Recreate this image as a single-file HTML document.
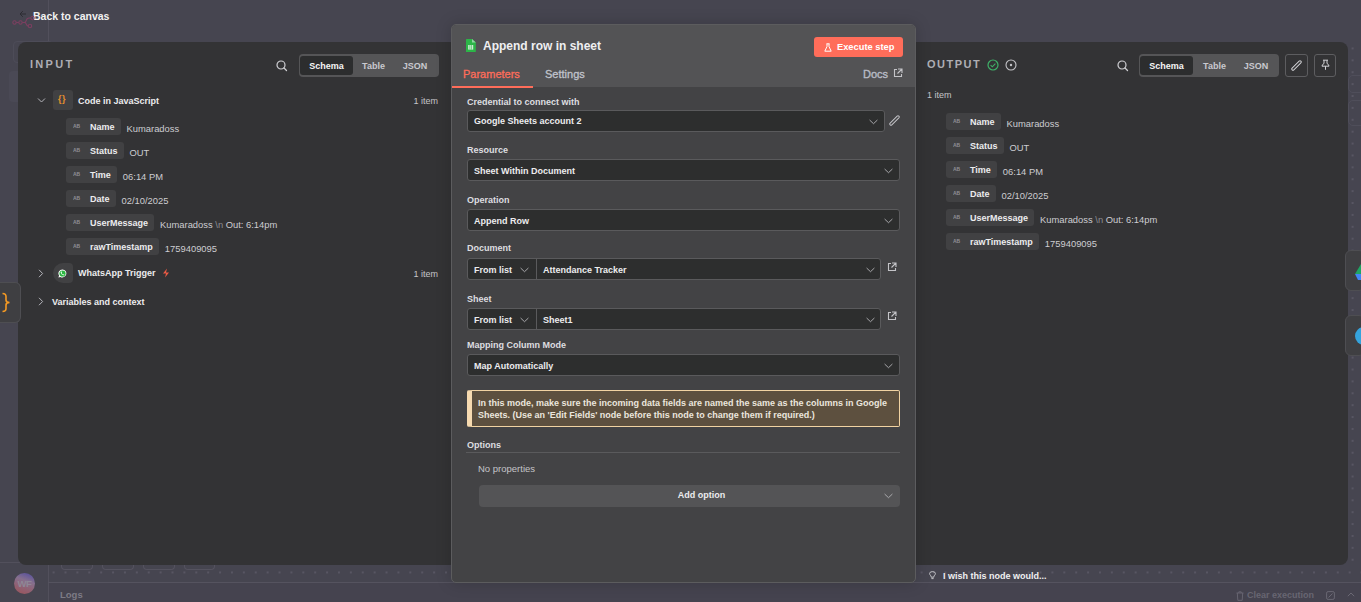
<!DOCTYPE html>
<html><head><meta charset="utf-8">
<style>
*{box-sizing:border-box;margin:0;padding:0}
html,body{width:1361px;height:602px;overflow:hidden}
body{background:#464550;font-family:"Liberation Sans",sans-serif;position:relative;color:#e6e6e8}
.abs{position:absolute}
.sidebar-line{left:48px;top:0;width:1px;height:602px;background:#52505c}
.side-hline{left:0;top:562px;width:48px;height:1px;background:#52505c}
.logs-line{left:48px;top:582px;width:1313px;height:1px;background:#55535f}
.logs{left:49px;top:583px;width:1312px;height:19px;background:#45434f}
.logs-txt{left:60px;top:589px;font-size:9.5px;font-weight:bold;color:#7d7b86}
.avatar{left:14px;top:573px;width:21px;height:21px;border-radius:50%;background:linear-gradient(200deg,#4e4aa0 0%,#86708e 38%,#8e6478 60%,#9c5258 100%);color:#8e8796;font-size:9.5px;font-weight:bold;text-align:center;line-height:21px;letter-spacing:-0.3px}
.back{left:33px;top:10px;font-size:10.5px;font-weight:bold;color:#f2f2f2}
.panel{background:#333335;border-radius:8px}
.inp{left:18px;top:42px;width:440px;height:523px}
.outp{left:908px;top:42px;width:440px;height:523px}
.lbl-big{font-size:11px;letter-spacing:2.3px;color:#aeaeb4;font-weight:bold}
.seg{height:23px;background:#555557;border-radius:4px}
.seg span{position:absolute;top:2px;height:19px;line-height:20px;font-size:9px;font-weight:bold;color:#c9c9cf;text-align:center}
.seg .on{background:#2c2d2e;border-radius:3px;color:#f5f5f5}
.pill{height:17px;background:#414143;border-radius:3px;font-size:10px;font-weight:bold;color:#ececec;line-height:17px}
.pill i{position:absolute;left:7px;top:0;font-style:normal;font-size:5px;color:#9a9aa0;letter-spacing:0.2px}
.pill b{position:absolute;left:24px;top:-1px;font-weight:bold}
.val{font-size:10px;color:#cfcfd3}
.modal{left:451px;top:24px;width:465px;height:559px;background:#434345;border:1px solid #5c5c5e;border-radius:5px;overflow:hidden;box-shadow:0 0 16px rgba(0,0,0,.18)}
.mhead{left:0;top:0;width:463px;height:62px;background:#535355}
.flabel{font-size:10px;font-weight:bold;color:#e2e2e4}
.field{background:#2d2e2e;border:1px solid #58585a;border-radius:4px;height:22px}
.field span{position:absolute;left:6px;top:0;line-height:20px;font-size:10px;font-weight:bold;color:#eeeeee}
.chev{position:absolute;width:9px;height:6px}

.ttl{font-size:9px;font-weight:bold;color:#ececee;line-height:11px}
.cnt{font-size:9px;color:#c4c4c8;text-align:right;line-height:11px}
.row{position:absolute;height:17px;display:flex;align-items:flex-start}
.pl{position:relative;height:17px;background:#414143;border-radius:3px;padding:0 6px 0 24px;font-size:9px;font-weight:bold;color:#ececee;line-height:18px;white-space:nowrap}
.pl:before{content:"";position:absolute;left:7px;top:7px;width:8px;height:3px;background:none}
.ab{position:absolute;left:7px;top:6px;width:8px;height:4px}
.vl{margin-left:6px;margin-top:5px;font-size:9.4px;color:#cdcdd1;line-height:12px;white-space:nowrap}

.fl{position:absolute;left:15px;margin-top:1px;font-size:9px;font-weight:bold;color:#dedee0;line-height:11px}
.fd{position:absolute;left:16px;height:22px;background:#2d2e2e;border:1px solid #5a5a5c;border-radius:3px}
.fd .t{position:absolute;left:6px;top:5px;font-size:9px;font-weight:bold;color:#ececee;line-height:12px;white-space:nowrap}
.cv{position:absolute;top:8px;width:9px;height:6px}
.ext{position:absolute;width:10px;height:10px}
.dots{background-image:radial-gradient(circle,#585663 0.7px,transparent 0.9px);background-size:11.9px 11.9px;background-position:10.55px 0.5px}
</style></head><body>
<div class="abs sidebar-line"></div>
<div class="abs side-hline"></div>
<div class="abs logs-line"></div>
<div class="abs logs"></div>
<div class="abs logs-txt">Logs</div>
<div class="abs avatar">WF</div>
<div class="abs back">Back to canvas</div>


<!-- canvas background details -->
<div class="abs dots" style="left:49px;top:566px;width:1312px;height:16px"></div>
<div class="abs dots" style="left:1348px;top:42px;width:13px;height:524px"></div>

<div class="abs" style="left:13px;top:41px;width:40px;height:22px;border:1px solid #4d4c58;border-radius:4px"></div>
<div class="abs" style="left:9px;top:71px;width:30px;height:31px;background:#4a4955;border-radius:4px"></div>
<svg class="abs" style="left:11px;top:15px" width="26" height="14" viewBox="0 0 26 14"><g fill="none" stroke="#7b3f60" stroke-width="1.1"><circle cx="3.5" cy="7.5" r="1.7"/><circle cx="9.5" cy="7.5" r="1.7"/><circle cx="19" cy="11" r="1.7"/><circle cx="21.5" cy="3" r="1.7"/><path d="M5.2 7.5 H7.8 M11.2 7.5 H13.5 Q14.5 7.5 15 6 Q15.8 3 18 3 H19.8 M13.5 7.5 Q14.8 7.5 15.5 9.5 Q16 11 17.3 11"/></g></svg>
<svg class="abs" style="left:19px;top:10px" width="8" height="8" viewBox="0 0 8 8"><path d="M7 4 H1.2 M3.8 1.2 L1 4 L3.8 6.8" fill="none" stroke="#2c2c33" stroke-width="1"/></svg>
<div class="abs" style="left:1348px;top:75px;width:20px;height:18px;border:1px solid #4f4e5a;border-radius:5px"></div>
<div class="abs" style="left:1348px;top:100px;width:20px;height:26px;border:1px solid #4f4e5a;border-radius:5px"></div>
<div class="abs" style="left:61px;top:550px;width:32px;height:20px;border:1px solid #55535f;border-radius:0 0 4px 4px;border-top:none"></div>
<div class="abs" style="left:102px;top:550px;width:32px;height:20px;border:1px solid #55535f;border-radius:0 0 4px 4px;border-top:none"></div>
<div class="abs" style="left:143px;top:550px;width:32px;height:20px;border:1px solid #55535f;border-radius:0 0 4px 4px;border-top:none"></div>
<div class="abs" style="left:184px;top:550px;width:31px;height:20px;border:1px solid #55535f;border-radius:0 0 4px 4px;border-top:none"></div>
<svg class="abs" style="left:929px;top:571px" width="7" height="9" viewBox="0 0 7 9"><path d="M2.2 6.2 Q2.2 5 1.4 4.2 Q0.6 3.4 0.6 2.6 Q0.6 0.6 3.5 0.6 Q6.4 0.6 6.4 2.6 Q6.4 3.4 5.6 4.2 Q4.8 5 4.8 6.2 Z M2.4 7.6 H4.6" fill="none" stroke="#d0d0d4" stroke-width="0.9"/></svg>
<div class="abs" style="left:943px;top:571px;font-size:9px;font-weight:bold;color:#efeff1;line-height:11px">I wish this node would...</div>
<svg class="abs" style="left:1236px;top:591px" width="8" height="10" viewBox="0 0 8 10"><path d="M0.5 2 H7.5 M2.8 2 V0.8 H5.2 V2 M1.3 2 L1.8 9.3 H6.2 L6.7 2" fill="none" stroke="#6a6874" stroke-width="0.9"/></svg>
<div class="abs" style="left:1247px;top:590px;font-size:9px;font-weight:bold;color:#686672;line-height:11px">Clear execution</div>
<svg class="abs" style="left:1326px;top:591px" width="9" height="9" viewBox="0 0 9 9"><rect x="0.6" y="0.6" width="7.8" height="7.8" rx="1.5" fill="none" stroke="#6a6874" stroke-width="1"/><path d="M2.5 6.5 L6.5 2.5" stroke="#6a6874"/></svg>
<svg class="abs" style="left:1347px;top:592px" width="8" height="5" viewBox="0 0 8 5"><path d="M0.8 4.2 L4 1 L7.2 4.2" fill="none" stroke="#6a6874" stroke-width="1"/></svg>

<!-- INPUT panel -->
<div class="abs panel inp"></div>
<div class="abs lbl-big" style="left:30px;top:58px">INPUT</div>
<svg class="abs" style="left:276px;top:60px" width="12" height="12" viewBox="0 0 12 12"><circle cx="5" cy="5" r="4" fill="none" stroke="#cfcfd3" stroke-width="1.2"/><path d="M8 8 L10.5 10.5" stroke="#cfcfd3" stroke-width="1.3" stroke-linecap="round"/></svg>
<div class="abs seg" style="left:299px;top:54px;width:140px">
  <span class="on" style="left:1px;width:53px">Schema</span>
  <span style="left:53px;width:43px">Table</span>
  <span style="left:95px;width:42px">JSON</span>
</div>
<svg class="abs" style="left:37px;top:97px" width="9" height="7" viewBox="0 0 9 7"><path d="M1 1.5 L4.5 5 L8 1.5" fill="none" stroke="#b4b4ba" stroke-width="1"/></svg>
<div class="abs" style="left:53px;top:90px;width:20px;height:20px;background:#414143;border-radius:3px"></div>
<div class="abs" style="left:58px;top:94px;font-size:9px;color:#e8922d;font-weight:bold;letter-spacing:0.5px">{}</div>
<div class="abs ttl" style="left:78px;top:96px">Code in JavaScript</div>
<div class="abs cnt" style="left:400px;width:38px;top:96px">1 item</div>
<div class="row" style="left:66px;top:118px"><div class="pl"><svg class="ab" viewBox="0 0 8 4"><text x="0" y="4" font-size="5" font-family="Liberation Sans" font-weight="bold" fill="#8f8f95">AB</text></svg>Name</div><div class="vl">Kumaradoss</div></div>
<div class="row" style="left:66px;top:142px"><div class="pl"><svg class="ab" viewBox="0 0 8 4"><text x="0" y="4" font-size="5" font-family="Liberation Sans" font-weight="bold" fill="#8f8f95">AB</text></svg>Status</div><div class="vl">OUT</div></div>
<div class="row" style="left:66px;top:166px"><div class="pl"><svg class="ab" viewBox="0 0 8 4"><text x="0" y="4" font-size="5" font-family="Liberation Sans" font-weight="bold" fill="#8f8f95">AB</text></svg>Time</div><div class="vl">06:14 PM</div></div>
<div class="row" style="left:66px;top:190px"><div class="pl"><svg class="ab" viewBox="0 0 8 4"><text x="0" y="4" font-size="5" font-family="Liberation Sans" font-weight="bold" fill="#8f8f95">AB</text></svg>Date</div><div class="vl">02/10/2025</div></div>
<div class="row" style="left:66px;top:214px"><div class="pl"><svg class="ab" viewBox="0 0 8 4"><text x="0" y="4" font-size="5" font-family="Liberation Sans" font-weight="bold" fill="#8f8f95">AB</text></svg>UserMessage</div><div class="vl">Kumaradoss <span style="color:#8d8d92">\n</span> Out: 6:14pm</div></div>
<div class="row" style="left:66px;top:238px"><div class="pl"><svg class="ab" viewBox="0 0 8 4"><text x="0" y="4" font-size="5" font-family="Liberation Sans" font-weight="bold" fill="#8f8f95">AB</text></svg>rawTimestamp</div><div class="vl">1759409095</div></div>

<svg class="abs" style="left:38px;top:269px" width="6" height="9" viewBox="0 0 6 9"><path d="M1 0.8 L4.6 4.5 L1 8.2" fill="none" stroke="#b4b4ba" stroke-width="1"/></svg>
<div class="abs" style="left:53px;top:263px;width:20px;height:20px;background:#414143;border-radius:10px 4px 4px 10px"></div>
<svg class="abs" style="left:58px;top:269px" width="9" height="9" viewBox="0 0 9 9"><path d="M4.5 0.4 A4 4 0 1 1 2.4 7.9 L0.4 8.6 L1.1 6.6 A4 4 0 0 1 4.5 0.4 Z" fill="#fff"/><circle cx="4.5" cy="4.5" r="3.1" fill="#2bb741"/><path d="M3 2.6 Q2.5 3 2.8 4 Q3.5 5.8 5.4 6.3 Q6.2 6.4 6.4 5.7 L5.6 5.2 L5.1 5.6 Q4 5.1 3.6 4 L4 3.5 L3.6 2.6 Z" fill="#fff"/></svg>
<div class="abs ttl" style="left:78px;top:268px">WhatsApp Trigger</div>
<svg class="abs" style="left:162px;top:268px" width="8" height="10" viewBox="0 0 8 10"><path d="M5 0.5 L1 5.5 L4 5.5 L3 9.5 L7 4.5 L4 4.5 Z" fill="#ee5b45"/></svg>
<div class="abs cnt" style="left:400px;width:38px;top:269px">1 item</div>
<svg class="abs" style="left:38px;top:297px" width="6" height="9" viewBox="0 0 6 9"><path d="M1 0.8 L4.6 4.5 L1 8.2" fill="none" stroke="#b4b4ba" stroke-width="1"/></svg>
<div class="abs ttl" style="left:52px;top:297px">Variables and context</div>


<div class="abs" style="left:0;top:282px;width:21px;height:41px;background:#3f3f42;border:1px solid #4e4e52;border-left:none;border-radius:0 6px 6px 0"></div>
<svg class="abs" style="left:1px;top:292px" width="10" height="21" viewBox="0 0 10 21"><path d="M1.5 1.5 Q5 1.5 5 4.5 V8 Q5 10.5 8.5 10.5 Q5 10.5 5 13 V16.5 Q5 19.5 1.5 19.5" fill="none" stroke="#f59a23" stroke-width="1.6"/></svg>
<!-- OUTPUT panel -->
<div class="abs panel outp"></div>
<div class="abs lbl-big" style="left:927px;top:58px;letter-spacing:1.5px">OUTPUT</div>
<svg class="abs" style="left:987px;top:59px" width="12" height="12" viewBox="0 0 12 12"><circle cx="6" cy="6" r="5" fill="none" stroke="#3fb168" stroke-width="1.2"/><path d="M3.6 6.2 L5.3 7.8 L8.4 4.6" fill="none" stroke="#3fb168" stroke-width="1.1"/></svg>
<svg class="abs" style="left:1005px;top:59px" width="12" height="12" viewBox="0 0 12 12"><circle cx="6" cy="6" r="5" fill="none" stroke="#c4c4c8" stroke-width="1.1"/><circle cx="6" cy="6" r="1.2" fill="#c4c4c8"/></svg>
<svg class="abs" style="left:1117px;top:60px" width="12" height="12" viewBox="0 0 12 12"><circle cx="5" cy="5" r="4" fill="none" stroke="#cfcfd3" stroke-width="1.2"/><path d="M8 8 L10.5 10.5" stroke="#cfcfd3" stroke-width="1.3" stroke-linecap="round"/></svg>
<div class="abs seg" style="left:1139px;top:54px;width:140px">
  <span class="on" style="left:1px;width:53px">Schema</span>
  <span style="left:54px;width:43px">Table</span>
  <span style="left:96px;width:42px">JSON</span>
</div>
<div class="abs" style="left:1285px;top:54px;width:23px;height:23px;border:1px solid #5d5d60;border-radius:3px"></div>
<svg class="abs" style="left:1291px;top:60px" width="11" height="11" viewBox="0 0 11 11"><path d="M2 9 L9 2" stroke="#d4d4d8" stroke-width="3.4" stroke-linecap="round"/><path d="M2 9 L9 2" stroke="#333335" stroke-width="1.5" stroke-linecap="round"/></svg>
<div class="abs" style="left:1314px;top:54px;width:22px;height:23px;border:1px solid #5d5d60;border-radius:3px"></div>
<svg class="abs" style="left:1320px;top:59px" width="11" height="12" viewBox="0 0 11 12"><path d="M3 1.2 H8 M4 1.2 V4.5 Q2 5.5 2 7.2 H9 Q9 5.5 7 4.5 V1.2 M5.5 7.2 V10.8" fill="none" stroke="#d4d4d8" stroke-width="1" stroke-linejoin="round"/></svg>
<div class="abs cnt" style="left:927px;top:90px;text-align:left">1 item</div>
<div class="row" style="left:946px;top:113px"><div class="pl"><svg class="ab" viewBox="0 0 8 4"><text x="0" y="4" font-size="5" font-family="Liberation Sans" font-weight="bold" fill="#8f8f95">AB</text></svg>Name</div><div class="vl">Kumaradoss</div></div>
<div class="row" style="left:946px;top:137px"><div class="pl"><svg class="ab" viewBox="0 0 8 4"><text x="0" y="4" font-size="5" font-family="Liberation Sans" font-weight="bold" fill="#8f8f95">AB</text></svg>Status</div><div class="vl">OUT</div></div>
<div class="row" style="left:946px;top:161px"><div class="pl"><svg class="ab" viewBox="0 0 8 4"><text x="0" y="4" font-size="5" font-family="Liberation Sans" font-weight="bold" fill="#8f8f95">AB</text></svg>Time</div><div class="vl">06:14 PM</div></div>
<div class="row" style="left:946px;top:185px"><div class="pl"><svg class="ab" viewBox="0 0 8 4"><text x="0" y="4" font-size="5" font-family="Liberation Sans" font-weight="bold" fill="#8f8f95">AB</text></svg>Date</div><div class="vl">02/10/2025</div></div>
<div class="row" style="left:946px;top:209px"><div class="pl"><svg class="ab" viewBox="0 0 8 4"><text x="0" y="4" font-size="5" font-family="Liberation Sans" font-weight="bold" fill="#8f8f95">AB</text></svg>UserMessage</div><div class="vl">Kumaradoss <span style="color:#8d8d92">\n</span> Out: 6:14pm</div></div>
<div class="row" style="left:946px;top:233px"><div class="pl"><svg class="ab" viewBox="0 0 8 4"><text x="0" y="4" font-size="5" font-family="Liberation Sans" font-weight="bold" fill="#8f8f95">AB</text></svg>rawTimestamp</div><div class="vl">1759409095</div></div>


<div class="abs" style="left:1345px;top:250px;width:20px;height:41px;background:#3f3f42;border:1px solid #4e4e52;border-radius:6px"></div>
<svg class="abs" style="left:1355px;top:264px" width="8" height="16" viewBox="0 0 8 16"><path d="M0 10 L6 0 L8 3 V10 Z" fill="#1fa463"/><path d="M0 10 H8 V16 H3 Z" fill="#4285f4"/></svg>
<div class="abs" style="left:1345px;top:315px;width:20px;height:41px;background:#3f3f42;border:1px solid #4e4e52;border-radius:6px"></div>
<div class="abs" style="left:1355px;top:327px;width:18px;height:18px;border-radius:50%;background:#35a3dc"></div>
<!-- Modal -->
<div class="abs modal">
  
<div class="abs mhead"></div>
<svg class="abs" style="left:14px;top:14px" width="10" height="13" viewBox="0 0 10 13"><path d="M0 0.5 Q0 0 0.5 0 H6 L9.8 3.6 V12.5 Q9.8 13 9.3 13 H0.5 Q0 13 0 12.5 Z" fill="#2cb548"/><path d="M6 0 V3.6 H9.8 Z" fill="#8fd6a2"/><rect x="2.2" y="6" width="5" height="4.6" fill="#d9f0de"/><path d="M3.9 6 V10.6 M5.6 6 V10.6" stroke="#2cb548" stroke-width="0.6"/></svg>
<div class="abs" style="left:31px;top:14px;font-size:12px;font-weight:bold;color:#efeff1;line-height:14px">Append row in sheet</div>
<div class="abs" style="left:362px;top:12px;width:89px;height:20px;background:#ff6d5a;border-radius:3px"></div>
<svg class="abs" style="left:372px;top:18px" width="8" height="9" viewBox="0 0 8 9"><path d="M2.5 0.8 H5.5 M3 0.8 V3.5 L0.8 8.2 H7.2 L5 3.5 V0.8" fill="none" stroke="#fff" stroke-width="1" stroke-linejoin="round"/></svg>
<div class="abs" style="left:385px;top:16px;font-size:9.3px;font-weight:bold;color:#fff;line-height:12px">Execute step</div>
<div class="abs" style="left:11px;top:43px;font-size:11px;color:#ff6d5a;line-height:13px;-webkit-text-stroke:0.3px #ff6d5a">Parameters</div>
<div class="abs" style="left:93px;top:43px;font-size:11px;color:#c0c3cc;line-height:13px;-webkit-text-stroke:0.3px #c0c3cc">Settings</div>
<div class="abs" style="left:0px;top:61px;width:81px;height:1.6px;background:#ff6d5a"></div>
<div class="abs" style="left:411px;top:43px;font-size:11px;color:#b8bcc6;line-height:13px;-webkit-text-stroke:0.35px #b8bcc6">Docs</div>
<svg class="ext" style="left:441px;top:43px" viewBox="0 0 10 10"><path d="M4 1.5 H1.5 V8.5 H8.5 V6" fill="none" stroke="#c4c4c8" stroke-width="1.1"/><path d="M5 1 H9 V5 M9 1 L4.5 5.5" fill="none" stroke="#c4c4c8" stroke-width="1.1"/></svg>
<div class="fl" style="top:71px">Credential to connect with</div>
<div class="fd" style="left:15px;top:85px;width:418px;height:22px"><div class="t" style="top:4px">Google Sheets account 2</div><svg class="cv" style="left:401px" viewBox="0 0 9 6"><path d="M0.6 1 L4.5 4.7 L8.4 1" fill="none" stroke="#b4b4b8" stroke-width="0.9"/></svg></div>
<svg class="abs" style="left:437px;top:90px" width="11" height="11" viewBox="0 0 11 11"><path d="M2 9 L9 2" stroke="#c4c4c8" stroke-width="3.4" stroke-linecap="round"/><path d="M2 9 L9 2" stroke="#434345" stroke-width="1.5" stroke-linecap="round"/></svg>
<div class="fl" style="top:119px">Resource</div>
<div class="fd" style="left:15px;top:134px;width:433px"><div class="t">Sheet Within Document</div><svg class="cv" style="left:416px" viewBox="0 0 9 6"><path d="M0.6 1 L4.5 4.7 L8.4 1" fill="none" stroke="#b4b4b8" stroke-width="0.9"/></svg></div>
<div class="fl" style="top:169px">Operation</div>
<div class="fd" style="left:15px;top:184px;width:433px"><div class="t">Append Row</div><svg class="cv" style="left:416px" viewBox="0 0 9 6"><path d="M0.6 1 L4.5 4.7 L8.4 1" fill="none" stroke="#b4b4b8" stroke-width="0.9"/></svg></div>
<div class="fl" style="top:217px">Document</div>
<div class="fd" style="left:15px;top:233px;width:414px"><div class="t">From list</div><svg class="cv" style="left:52px" viewBox="0 0 9 6"><path d="M0.6 1 L4.5 4.7 L8.4 1" fill="none" stroke="#b4b4b8" stroke-width="0.9"/></svg><div style="position:absolute;left:68px;top:0;width:1px;height:20px;background:#5a5a5c"></div><div class="t" style="left:75px">Attendance Tracker</div><svg class="cv" style="left:398px" viewBox="0 0 9 6"><path d="M0.6 1 L4.5 4.7 L8.4 1" fill="none" stroke="#b4b4b8" stroke-width="0.9"/></svg></div>
<svg class="ext" style="left:435px;top:237px" viewBox="0 0 10 10"><path d="M4 1.5 H1.5 V8.5 H8.5 V6" fill="none" stroke="#c4c4c8" stroke-width="1.1"/><path d="M5 1 H9 V5 M9 1 L4.5 5.5" fill="none" stroke="#c4c4c8" stroke-width="1.1"/></svg>
<div class="fl" style="top:268px">Sheet</div>
<div class="fd" style="left:15px;top:283px;width:414px"><div class="t">From list</div><svg class="cv" style="left:52px" viewBox="0 0 9 6"><path d="M0.6 1 L4.5 4.7 L8.4 1" fill="none" stroke="#b4b4b8" stroke-width="0.9"/></svg><div style="position:absolute;left:68px;top:0;width:1px;height:20px;background:#5a5a5c"></div><div class="t" style="left:75px">Sheet1</div><svg class="cv" style="left:398px" viewBox="0 0 9 6"><path d="M0.6 1 L4.5 4.7 L8.4 1" fill="none" stroke="#b4b4b8" stroke-width="0.9"/></svg></div>
<svg class="ext" style="left:435px;top:286px" viewBox="0 0 10 10"><path d="M4 1.5 H1.5 V8.5 H8.5 V6" fill="none" stroke="#c4c4c8" stroke-width="1.1"/><path d="M5 1 H9 V5 M9 1 L4.5 5.5" fill="none" stroke="#c4c4c8" stroke-width="1.1"/></svg>
<div class="fl" style="top:314px">Mapping Column Mode</div>
<div class="fd" style="left:15px;top:329px;width:433px"><div class="t">Map Automatically</div><svg class="cv" style="left:416px" viewBox="0 0 9 6"><path d="M0.6 1 L4.5 4.7 L8.4 1" fill="none" stroke="#b4b4b8" stroke-width="0.9"/></svg></div>
<div class="abs" style="left:15px;top:365px;width:433px;height:37px;background:#5d503f;border:1px solid #f2d3a2;border-left:5px solid #f6dab0;border-radius:2px"></div>
<div class="abs" style="left:26px;top:372px;width:430px;font-size:9px;font-weight:bold;color:#ebe6de;line-height:11.5px;padding-top:1px">In this mode, make sure the incoming data fields are named the same as the columns in Google<br>Sheets. (Use an 'Edit Fields' node before this node to change them if required.)</div>
<div class="fl" style="top:414px">Options</div>
<div class="abs" style="left:14px;top:427px;width:434px;height:1px;background:#5a5a5c"></div>
<div class="abs" style="left:26px;top:438px;font-size:9.5px;color:#c4c4c8;line-height:11px">No properties</div>
<div class="abs" style="left:27px;top:460px;width:421px;height:22px;background:#545456;border-radius:4px"><div style="position:absolute;left:12px;width:100%;top:5px;text-align:center;font-size:9px;font-weight:bold;color:#ececee;line-height:11px">Add option</div><svg class="cv" style="left:405px" viewBox="0 0 9 6"><path d="M0.6 1 L4.5 4.7 L8.4 1" fill="none" stroke="#b4b4b8" stroke-width="0.9"/></svg></div>

</div>
</body></html>
